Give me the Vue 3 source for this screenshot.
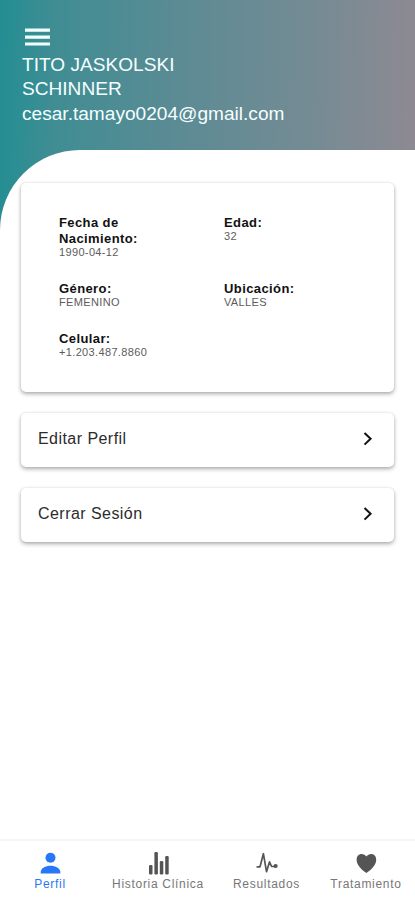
<script setup>
const details = [
  { label: 'Fecha de Nacimiento:', value: '1990-04-12' },
  { label: 'Edad:', value: '32' },
  { label: 'Género:', value: 'FEMENINO' },
  { label: 'Ubicación:', value: 'VALLES' },
  { label: 'Celular:', value: '+1.203.487.8860' },
]
const actions = ['Editar Perfil', 'Cerrar Sesión']
const tabs = [
  { label: 'Perfil', icon: 'person' },
  { label: 'Historia Clínica', icon: 'stats' },
  { label: 'Resultados', icon: 'pulse' },
  { label: 'Tratamiento', icon: 'heart' },
]
</script>

<template>
  <div class="page">
    <header class="header">
      <svg class="menu" viewBox="0 0 26 20" aria-label="Menú">
        <path d="M1 3.2h25M1 10.2h25M1 17h25" stroke="currentColor" stroke-width="3.2" />
      </svg>
      <div class="name">TITO JASKOLSKI SCHINNER</div>
      <div class="email">cesar.tamayo0204@gmail.com</div>
    </header>
    <main class="content">
      <section class="card details">
        <div v-for="d in details" :key="d.label">
          <div class="label">{{ d.label }}</div>
          <div class="value">{{ d.value }}</div>
        </div>
      </section>
      <button v-for="a in actions" :key="a" class="card action">
        <span>{{ a }}</span>
        <svg class="chevron" viewBox="0 0 10 14">
          <path d="M1.5 1 7.6 6.8 1.5 12.6" fill="none" stroke="#111" stroke-width="2" />
        </svg>
      </button>
    </main>
    <nav class="tabs">
      <div v-for="(t, i) in tabs" :key="t.label" class="tab" :class="{ active: i === 0 }">
        <svg class="icon" viewBox="0 0 24 24" fill="currentColor">
          <template v-if="t.icon === 'person'">
            <circle cx="12.5" cy="6.7" r="5" />
            <path d="M2.7 22.5v-1.4c0-4 5-6.4 9.8-6.4s9.8 2.4 9.8 6.4v1.4z" />
          </template>
          <g v-else-if="t.icon === 'stats'">
            <rect x="3" y="14" width="3.5" height="9.5" rx="1.2" />
            <rect x="8.4" y="1" width="3.5" height="22.5" rx="1.2" />
            <rect x="13.8" y="10" width="3.5" height="13.5" rx="1.2" />
            <rect x="19.2" y="5" width="3.5" height="18.5" rx="1.2" />
          </g>
          <g v-else-if="t.icon === 'pulse'">
            <path d="M2.2 15.8h2.8L8.4 2.7l3.1 18 3-9.8 2.1 4.6h4" fill="none" stroke="currentColor" stroke-width="1.7" stroke-linejoin="round" stroke-linecap="round" />
            <circle cx="20.6" cy="15" r="2.1" />
          </g>
          <path v-else d="M12.4 21.9C7.9 18.9 2.6 14.1 2.6 8.7 2.6 5 4.9 2.9 7.6 2.9c2 0 3.7 1 4.8 2.7 1.1-1.7 2.8-2.7 4.8-2.7 2.7 0 5 2.1 5 5.8 0 5.4-5.3 10.2-9.8 13.2z" />
        </svg>
        <span>{{ t.label }}</span>
      </div>
    </nav>
  </div>
</template>

<style>
body {
  margin: 0;
}
</style>

<style scoped>
.page {
  box-sizing: border-box;
  height: 900px;
  display: flex;
  flex-direction: column;
  font-family: "Liberation Sans", Arial, sans-serif;
  background: linear-gradient(91deg, #238e92 0%, #3f8d93 13%, #5b8b94 42%, #748b94 74%, #8e8992 100%) top / 100% 240px no-repeat;
}
.header {
  box-sizing: border-box;
  height: 150px;
  padding: 27px 22px 0;
  color: #f4ffff;
  font-size: 19.1px;
  line-height: 24.4px;
}
.menu {
  display: block;
  width: 26px;
  height: 20px;
  margin: 0 0 6px 2px;
}
.name {
  width: 190px;
}
.content {
  flex: 1;
  padding: 33px 21px 0;
  background: #fff;
  border-top-left-radius: 80px;
}
.card {
  box-sizing: border-box;
  width: 373px;
  border: 0;
  border-radius: 5px;
  background: #fff;
  box-shadow: 0 2px 4px rgba(0, 0, 0, .32), 0 0 3px rgba(0, 0, 0, .08);
}
.details {
  height: 209px;
  padding: 32px 38px 0;
  margin-bottom: 21px;
  display: grid;
  grid-template-columns: 100px 1fr;
  column-gap: 65px;
  row-gap: 23px;
  align-content: start;
}
.label {
  font-size: 13px;
  font-weight: 700;
  line-height: 16px;
  color: #111;
  letter-spacing: .4px;
}
.value {
  font-size: 11px;
  line-height: 11px;
  color: #5c5c5c;
  letter-spacing: .35px;
}
.action {
  display: flex;
  align-items: center;
  justify-content: space-between;
  height: 54px;
  margin: 0 0 21px;
  padding: 0 21px 3px 17px;
  font: 16px "Liberation Sans", Arial, sans-serif;
  letter-spacing: .45px;
  color: #2c2c2c;
}
.chevron {
  width: 10px;
  height: 14px;
  margin-top: 1px;
}
.tabs {
  box-sizing: border-box;
  height: 61px;
  display: grid;
  grid-template-columns: 100px 116px 101px 98px;
  border-top: 2px solid #f5f5f5;
  background: #fff;
}
.tab {
  display: flex;
  flex-direction: column;
  align-items: center;
  padding-top: 10px;
  color: #555;
  font-size: 12px;
  line-height: 14px;
  letter-spacing: .7px;
  white-space: nowrap;
}
.tab span {
  margin-top: 2px;
  color: #777;
}
.tab.active,
.tab.active span {
  color: #2878f5;
}
.icon {
  width: 24px;
  height: 24px;
}
</style>
